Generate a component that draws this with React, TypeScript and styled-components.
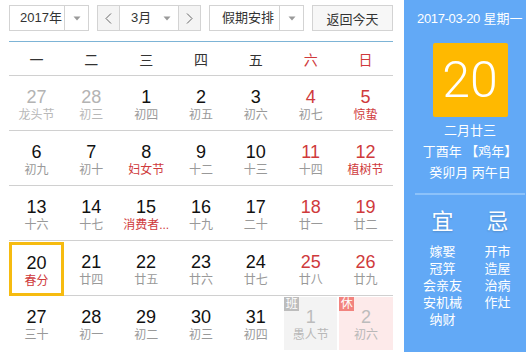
import React from 'react';
import styled, { createGlobalStyle, css } from 'styled-components';

const GlobalStyle = createGlobalStyle`
  html, body { margin: 0; padding: 0; background: #fff; }
  body { font-family: "Liberation Sans", "Noto Sans CJK SC", sans-serif; }
`;

const RED = '#cf3a3c';

const Page = styled.div`
  display: flex;
  width: 526px;
  height: 352px;
  overflow: hidden;
`;

const Main = styled.div`
  flex: none;
  width: 384px;
  padding: 5px 11px 0 9px;
`;

const Toolbar = styled.div`
  display: flex;
  justify-content: space-between;
  height: 26px;
`;

const Box = styled.div<{ $w: number }>`
  box-sizing: border-box;
  width: ${p => p.$w}px;
  height: 26px;
  border: 1px solid #d3d3d3;
  display: flex;
  align-items: stretch;
  font-size: 13px;
  color: #333;
  background: #fff;
`;

const SelectLabel = styled.div<{ $pad: number }>`
  flex: 1;
  display: flex;
  align-items: center;
  padding-left: ${p => p.$pad}px;
  line-height: 24px;
  white-space: nowrap;
`;

const ArrowPart = styled.div<{ $divider?: boolean }>`
  width: 23px;
  display: flex;
  align-items: center;
  justify-content: center;
  ${p => p.$divider && css`border-left: 1px solid #d3d3d3;`}
`;

const NavBtn = styled.div<{ $side: 'l' | 'r' }>`
  width: 21px;
  background: #f4f4f4;
  display: flex;
  align-items: center;
  justify-content: center;
  ${p => (p.$side === 'l' ? css`border-right: 1px solid #d3d3d3;` : css`border-left: 1px solid #d3d3d3;`)}
`;

const TodayBtn = styled.div`
  box-sizing: border-box;
  width: 81px;
  height: 26px;
  border: 1px solid #d3d3d3;
  background: #f7f7f7;
  font-size: 13px;
  color: #333;
  display: flex;
  align-items: center;
  justify-content: center;
`;

const Tri = () => (
  <svg width="8" height="5" viewBox="0 0 8 5">
    <path d="M0.5 0.5 L7.5 0.5 L4 4.5 Z" fill="#9a9a9a" />
  </svg>
);

const Chevron = ({ dir }: { dir: 'l' | 'r' }) => (
  <svg width="7" height="11" viewBox="0 0 7 11">
    <polyline
      points={dir === 'l' ? '6,0.5 1,5.5 6,10.5' : '1,0.5 6,5.5 1,10.5'}
      fill="none"
      stroke="#666"
      strokeWidth="1"
    />
  </svg>
);

const WeekHead = styled.div`
  margin-top: 10px;
  display: grid;
  grid-template-columns: repeat(7, 1fr);
  height: 33px;
  border-top: 1px solid #7db4d6;
  border-bottom: 1px solid #d0d0d0;
`;

const WeekDay = styled.div<{ $red?: boolean }>`
  display: flex;
  align-items: center;
  justify-content: center;
  font-size: 14px;
  color: ${p => (p.$red ? RED : '#333')};
`;

const WeekRow = styled.div<{ $last?: boolean }>`
  display: grid;
  grid-template-columns: repeat(7, 1fr);
  height: 54px;
  ${p => !p.$last && css`border-bottom: 1px solid #d0d0d0;`}
`;

type Kind = 'normal' | 'other' | 'work' | 'rest';

const Cell = styled.div<{ $kind: Kind; $sel?: boolean }>`
  position: relative;
  box-sizing: border-box;
  display: flex;
  flex-direction: column;
  align-items: center;
  padding-top: 11px;
  ${p => p.$sel && css`
    border: 3px solid #f6bb10;
    padding-top: 8px;
    margin-top: 1px;
    margin-bottom: -1px;
  `}
  ${p => p.$kind === 'work' && css`background: #f3f3f3; margin: 1px 1px 0 1px; padding-top: 10px;`}
  ${p => p.$kind === 'rest' && css`background: #fdeaea; margin: 1px 0 0 1px; padding-top: 10px;`}
`;

const DayNum = styled.div<{ $color: string }>`
  font-size: 18px;
  line-height: 20px;
  color: ${p => p.$color};
`;

const Lunar = styled.div<{ $color: string }>`
  font-size: 12px;
  line-height: 16px;
  color: ${p => p.$color};
  white-space: nowrap;
`;

const Badge = styled.div<{ $bg: string }>`
  position: absolute;
  left: 0;
  top: 0;
  width: 15px;
  height: 14px;
  background: ${p => p.$bg};
  color: #fff;
  font-size: 12px;
  line-height: 14px;
  text-align: center;
`;

const Side = styled.div`
  flex: none;
  box-sizing: border-box;
  width: 132px;
  background: #62a9f6;
  color: #fff;
  padding: 10px 11px 0 11px;
`;

const DateLine = styled.div`
  font-size: 13px;
  line-height: 18px;
  padding-left: 2px;
  white-space: nowrap;
`;

const DateDigits = styled.span`
  letter-spacing: -0.35px;
`;

const BigDay = styled.div`
  width: 75px;
  height: 74px;
  margin: 15px auto 0;
  background: #ffb900;
  border-radius: 2px;
  font-family: Roboto, "Liberation Sans", sans-serif;
  font-weight: 300;
  font-size: 50px;
  line-height: 74px;
  text-align: center;
  color: #fff;
`;

const LunarInfo = styled.div`
  margin-top: 3px;
  font-size: 13px;
  line-height: 21px;
  text-align: center;
  white-space: nowrap;
`;

const Divider = styled.div`
  margin-top: 10px;
  height: 2px;
  background: #8cc2fa;
`;

const YiJi = styled.div`
  display: grid;
  grid-template-columns: 1fr 1fr;
  margin-top: 14px;
`;

const YiJiCol = styled.div`
  display: flex;
  flex-direction: column;
  align-items: center;
`;

const YiJiHead = styled.div`
  font-size: 22px;
  line-height: 26px;
  margin-bottom: 8px;
  text-shadow: 0 1px 2px rgba(0, 0, 0, 0.18);
`;

const YiJiItem = styled.div`
  font-size: 13px;
  line-height: 17px;
  white-space: nowrap;
`;

type Day = { n: number; l: string; kind?: Kind; red?: boolean; fest?: boolean; sel?: boolean; badge?: string };

const weeks: Day[][] = [
  [
    { n: 27, l: '龙头节', kind: 'other' },
    { n: 28, l: '初三', kind: 'other' },
    { n: 1, l: '初四' },
    { n: 2, l: '初五' },
    { n: 3, l: '初六' },
    { n: 4, l: '初七', red: true },
    { n: 5, l: '惊蛰', red: true, fest: true },
  ],
  [
    { n: 6, l: '初九' },
    { n: 7, l: '初十' },
    { n: 8, l: '妇女节', fest: true },
    { n: 9, l: '十二' },
    { n: 10, l: '十三' },
    { n: 11, l: '十四', red: true },
    { n: 12, l: '植树节', red: true, fest: true },
  ],
  [
    { n: 13, l: '十六' },
    { n: 14, l: '十七' },
    { n: 15, l: '消费者...', fest: true },
    { n: 16, l: '十九' },
    { n: 17, l: '二十' },
    { n: 18, l: '廿一', red: true },
    { n: 19, l: '廿二', red: true },
  ],
  [
    { n: 20, l: '春分', fest: true, sel: true },
    { n: 21, l: '廿四' },
    { n: 22, l: '廿五' },
    { n: 23, l: '廿六' },
    { n: 24, l: '廿七' },
    { n: 25, l: '廿八', red: true },
    { n: 26, l: '廿九', red: true },
  ],
  [
    { n: 27, l: '三十' },
    { n: 28, l: '初一' },
    { n: 29, l: '初二' },
    { n: 30, l: '初三' },
    { n: 31, l: '初四' },
    { n: 1, l: '愚人节', kind: 'work', badge: '班' },
    { n: 2, l: '初六', kind: 'rest', badge: '休' },
  ],
];

const weekdays = ['一', '二', '三', '四', '五', '六', '日'];

function numColor(d: Day) {
  if (d.kind === 'other') return '#b3b3b3';
  if (d.kind === 'work' || d.kind === 'rest') return '#bcbcbc';
  return d.red ? RED : '#111';
}

function lunarColor(d: Day) {
  if (d.kind === 'other' || d.kind === 'work' || d.kind === 'rest') return '#b8b8b8';
  return d.fest ? RED : '#999';
}

export default function App() {
  return (
    <>
      <GlobalStyle />
      <Page>
        <Main>
          <Toolbar>
            <Box $w={80}>
              <SelectLabel $pad={10}>2017年</SelectLabel>
              <ArrowPart $divider><Tri /></ArrowPart>
            </Box>
            <Box $w={104}>
              <NavBtn $side="l"><Chevron dir="l" /></NavBtn>
              <SelectLabel $pad={11}>3月</SelectLabel>
              <ArrowPart><Tri /></ArrowPart>
              <NavBtn $side="r"><Chevron dir="r" /></NavBtn>
            </Box>
            <Box $w={95}>
              <SelectLabel $pad={12}>假期安排</SelectLabel>
              <ArrowPart $divider><Tri /></ArrowPart>
            </Box>
            <TodayBtn>返回今天</TodayBtn>
          </Toolbar>
          <WeekHead>
            {weekdays.map((w, i) => (
              <WeekDay key={w} $red={i >= 5}>{w}</WeekDay>
            ))}
          </WeekHead>
          {weeks.map((wk, wi) => (
            <WeekRow key={wi} $last={wi === weeks.length - 1}>
              {wk.map((d, di) => (
                <Cell key={di} $kind={d.kind ?? 'normal'} $sel={d.sel}>
                  {d.badge && <Badge $bg={d.kind === 'rest' ? '#f2837e' : '#bdbdbd'}>{d.badge}</Badge>}
                  <DayNum $color={numColor(d)}>{d.n}</DayNum>
                  <Lunar $color={lunarColor(d)}>{d.l}</Lunar>
                </Cell>
              ))}
            </WeekRow>
          ))}
        </Main>
        <Side>
          <DateLine><DateDigits>2017-03-20</DateDigits> 星期一</DateLine>
          <BigDay>20</BigDay>
          <LunarInfo>
            <div>二月廿三</div>
            <div>丁酉年 【鸡年】</div>
            <div>癸卯月 丙午日</div>
          </LunarInfo>
          <Divider />
          <YiJi>
            <YiJiCol>
              <YiJiHead>宜</YiJiHead>
              {['嫁娶', '冠笄', '会亲友', '安机械', '纳财'].map(t => <YiJiItem key={t}>{t}</YiJiItem>)}
            </YiJiCol>
            <YiJiCol>
              <YiJiHead>忌</YiJiHead>
              {['开市', '造屋', '治病', '作灶'].map(t => <YiJiItem key={t}>{t}</YiJiItem>)}
            </YiJiCol>
          </YiJi>
        </Side>
      </Page>
    </>
  );
}
